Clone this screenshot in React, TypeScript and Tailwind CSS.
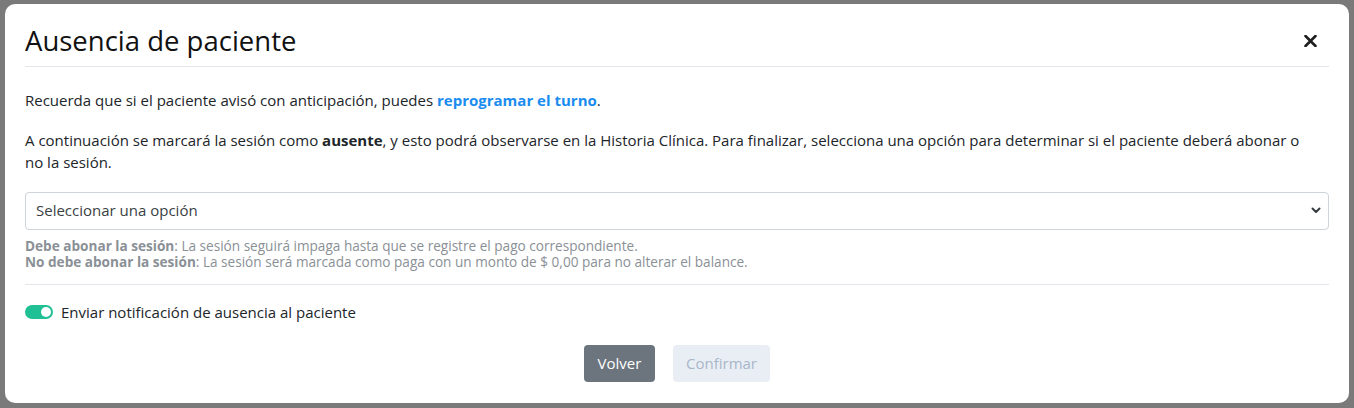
import React from "react";

function CloseIcon() {
  return (
    <svg width="13" height="12" viewBox="0 0 13 12" fill="none">
      <path d="M1.5 1 L11.5 11 M11.5 1 L1.5 11" stroke="#1f1f1f" strokeWidth="2.6" strokeLinecap="round" />
    </svg>
  );
}

function Chevron() {
  return (
    <svg width="10" height="7" viewBox="0 0 10 7" fill="none">
      <path d="M1.5 1.5 L5 5 L8.5 1.5" stroke="#343a40" strokeWidth="2" strokeLinecap="round" strokeLinejoin="round" />
    </svg>
  );
}

export default function App() {
  return (
    <div
      className="h-[408px] w-[1354px] overflow-hidden bg-[#7a7a7a] pt-[4px] px-[5px]"
      style={{ fontFamily: "'Open Sans', 'Noto Sans', sans-serif" }}
    >
      {/* modal */}
      <div className="flex h-[399px] w-[1344px] flex-col rounded-[10px] bg-white text-[15px] text-[#212529]">
        <div className="mx-[20px] flex h-[63px] items-center justify-between border-b border-[#e3e6ea]">
          <h5 className="mt-[12px] text-[27.5px] leading-none text-[#111]">Ausencia de paciente</h5>
          <button className="mr-[12px] mt-[12px] flex items-center">
            <CloseIcon />
          </button>
        </div>

        <div className="flex flex-col px-[20px] pt-[22px]">
          <p className="leading-[22.5px]">
            Recuerda que si el paciente avisó con anticipación, puedes{" "}
            <a className="font-bold text-[#1a8cf0]">reprogramar el turno</a>.
          </p>
          <p className="mt-[17px] max-w-[1290px] leading-[22.5px]">
            A continuación se marcará la sesión como <b>ausente</b>, y esto podrá observarse en la Historia Clínica. Para
            finalizar, selecciona una opción para determinar si el paciente deberá abonar o no la sesión.
          </p>

          <div className="mt-[18px] flex h-[38px] items-center justify-between rounded-[4px] border border-[#ced4da] pl-[10px] pr-[7px] text-[#3a3f44]">
            <span>Seleccionar una opción</span>
            <Chevron />
          </div>

          <div className="mt-[8px] text-[13.6px] leading-[16px] text-[#8a9096]">
            <div>
              <span className="font-bold">Debe abonar la sesión</span>: La sesión seguirá impaga hasta que se registre el pago
              correspondiente.
            </div>
            <div>
              <span className="font-bold">No debe abonar la sesión</span>: La sesión será marcada como paga con un monto de $
              0,00 para no alterar el balance.
            </div>
          </div>

          <div className="mt-[14px] border-t border-[#e3e6ea]" />

          <div className="mt-[16px] flex items-center gap-[8px]">
            <span className="flex h-[14px] w-[28px] items-center justify-end rounded-full bg-[#20bf94] pr-[2px]">
              <span className="h-[10px] w-[10px] rounded-full bg-white" />
            </span>
            <span className="leading-[22px]">Enviar notificación de ausencia al paciente</span>
          </div>

          <div className="mt-[22px] flex justify-center gap-[18px]">
            <button className="h-[37px] w-[71px] rounded-[4px] bg-[#6c757d] text-[15px] text-white">Volver</button>
            <button className="h-[37px] w-[97px] rounded-[4px] bg-[#e9eef5] text-[15px] text-[#a8b6c8]">Confirmar</button>
          </div>
        </div>
      </div>
    </div>
  );
}
